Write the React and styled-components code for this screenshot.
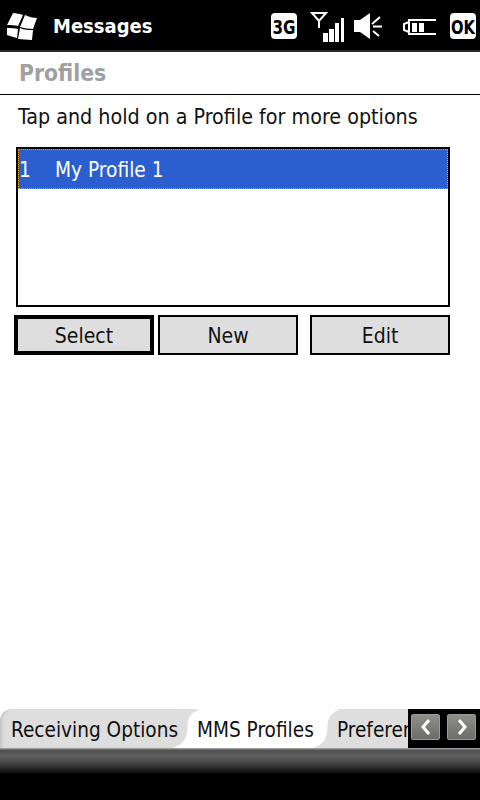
import React from "react";
import styled, { createGlobalStyle } from "styled-components";

const Global = createGlobalStyle`
  html, body { margin: 0; padding: 0; background: #fff; }
  * { box-sizing: border-box; }
  #root { width: 480px; height: 800px; overflow: hidden; }
`;

const FONT = `"DejaVu Sans", "Noto Sans", sans-serif`;

const Screen = styled.div`
  width: 480px;
  height: 800px;
  display: flex;
  flex-direction: column;
  background: #fff;
  font-family: ${FONT};
  font-stretch: condensed;
  color: #111;
`;

const TopBar = styled.header`
  height: 52px;
  flex: none;
  background: #000;
  border-bottom: 2px solid #2b2b2b;
  display: flex;
  align-items: center;
  padding: 1px 3px 0 7px;
  color: #fff;
`;

const Start = styled.svg`
  width: 32px;
  height: 32px;
  flex: none;
`;

const AppTitle = styled.span`
  margin-left: 14px;
  font-size: 20px;
  font-weight: 700;
  flex: 1;
`;

const Tray = styled.svg`
  width: 220px;
  height: 50px;
  flex: none;
  margin-right: -3px;
  margin-top: -1px;
`;

const Heading = styled.div`
  height: 43px;
  flex: none;
  border-bottom: 1px solid #000;
  display: flex;
  align-items: center;
  padding: 0 0 0 19px;
  font-size: 22.7px;
  font-weight: 700;
  color: #a0a0a0;
`;

const Hint = styled.p`
  margin: 0;
  height: 52px;
  flex: none;
  padding: 9px 0 0 18px;
  font-size: 21.3px;
  line-height: 26px;
  color: #111;
`;

const Body = styled.main`
  flex: 1;
  min-height: 0;
  display: flex;
  flex-direction: column;
  padding: 0 30px 0 14px;
`;

const List = styled.div`
  margin-left: 2px;
  height: 160px;
  flex: none;
  border: 2px solid #000;
  background: #fff;
`;

const ListRow = styled.div`
  height: 40px;
  background: #2b5fcf;
  outline: 1px dotted #e5a11c;
  outline-offset: -1px;
  color: #fff;
  font-size: 20.7px;
  display: flex;
  align-items: center;
  padding: 1px 0 0 1px;
`;

const RowIndex = styled.span`
  width: 36px;
  flex: none;
`;

const Actions = styled.div`
  margin-top: 8px;
  display: flex;
`;

const Action = styled.button`
  height: 40px;
  width: ${(p) => p.$w}px;
  margin-left: ${(p) => p.$gap}px;
  padding: 2px 0 0;
  background: #dedede;
  border: ${(p) => (p.$focus ? 4 : 2)}px solid #000;
  border-radius: 0;
  font-family: inherit;
  font-stretch: condensed;
  font-size: 21px;
  color: #111;
`;

const Spacer = styled.div`
  flex: 1;
`;

const TabBar = styled.nav`
  height: 39px;
  flex: none;
  display: flex;
  background: #fff;
`;

const Tab = styled.div`
  position: relative;
  width: ${(p) => p.$w}px;
  flex: none;
  background: ${(p) => (p.$active ? "#fff" : "#dedede")};
  border-top-left-radius: ${(p) => (p.$first ? 12 : 0)}px;
  ${(p) => p.$first && "box-shadow: inset 3px 0 3px -1px #c4c4c4;"}
  font-size: 20.6px;
  line-height: 42px;
  color: #111;
  white-space: nowrap;
  padding-left: ${(p) => p.$pad}px;
  ${(p) => p.$clip && "overflow: hidden;"}
`;

const TabLabel = styled.span`
  position: relative;
  z-index: 2;
`;

const TabEdge = styled.svg`
  position: absolute;
  top: 0;
  left: ${(p) => p.$x}px;
  width: 28px;
  height: 39px;
  z-index: 1;
`;

const Pager = styled.div`
  position: relative;
  z-index: 3;
  width: 72px;
  flex: none;
  background: #000;
  display: flex;
  gap: 7px;
  padding: 5px 0 0 3px;
`;

const PageButton = styled.div`
  width: 29px;
  height: 26px;
  border-radius: 2px;
  border: 1px solid #9a9a96;
  background: linear-gradient(#8e8e8a, #6c6c68);
  display: flex;
  align-items: center;
  justify-content: center;
`;

const Chevron = styled.svg`
  width: 14px;
  height: 20px;
`;

const BottomBar = styled.footer`
  height: 52px;
  flex: none;
  background: linear-gradient(#9a9a9a 0, #9a9a9a 1px, #4e4e4e 2px, #626262 8px, #3a3a3a 17px, #0c0c0c 25px, #000 26px);
`;

const Edge = ({ x, left, right }) => (
  <TabEdge $x={x} viewBox="0 0 28 39" aria-hidden="true">
    <rect width="28" height="39" fill={right} />
    <path
      d="M0 0H22C25 0 27 1 27 1C21 3 17 7 16 12C15 18 16 25 13 30C11 34 6 38 0 39Z"
      fill={left}
    />
  </TabEdge>
);

export default function App() {
  return (
    <Screen>
      <Global />
      <TopBar>
        <Start viewBox="0 0 32 32" aria-hidden="true">
          <g fill="#fff">
            <path d="M6 3C9 3 13 4 16 5L11 16C8 15 3 15 0 15Z" />
            <path d="M18 5C22 7 26 8 30 8L26 19C22 19 17 18 13 17Z" />
            <path d="M0 18C4 18 8 18 11 19L10 28C6 27 3 26 0 25Z" />
            <path d="M13 18C17 20 22 20 26 20L25 30C20 30 15 29 11 29Z" />
          </g>
        </Start>
        <AppTitle>Messages</AppTitle>
        <Tray viewBox="0 0 220 50" aria-hidden="true">
          <rect x="11" y="13" width="26" height="26" rx="4" fill="#fff" />
          <text x="24" y="34" textAnchor="middle" fontSize="20" fontWeight="700" fill="#000" fontFamily="DejaVu Sans" textLength="23" lengthAdjust="spacingAndGlyphs">3G</text>
          <path d="M52 13H66L59 21ZM59 21V28" fill="none" stroke="#fff" strokeWidth="2" />
          <path d="M63 33h5v9h-5zM69 29h5v13h-5zM75 23h4v19h-4zM81 18h3v24h-3z" fill="#fff" />
          <path d="M94 20h6l10-7v26l-10-7h-6z" fill="#fff" />
          <path d="M112 24l8-7M113 26.5h9M113 31l6 5" stroke="#fff" strokeWidth="2" fill="none" />
          <path d="M176 20h-27v14h27M149 22l-5 2v6l5 2" fill="none" stroke="#fff" strokeWidth="2" />
          <rect x="152" y="23" width="5" height="9" fill="#fff" />
          <rect x="159" y="23" width="5" height="9" fill="#fff" />
          <rect x="190" y="13" width="26" height="26" rx="4" fill="#fff" />
          <text x="203" y="34" textAnchor="middle" fontSize="20" fontWeight="700" fill="#000" fontFamily="DejaVu Sans" textLength="24" lengthAdjust="spacingAndGlyphs">OK</text>
        </Tray>
      </TopBar>
      <Heading>Profiles</Heading>
      <Hint>Tap and hold on a Profile for more options</Hint>
      <Body>
        <List>
          <ListRow>
            <RowIndex>1</RowIndex>
            My Profile 1
          </ListRow>
        </List>
        <Actions>
          <Action $w={140} $gap={0} $focus>Select</Action>
          <Action $w={140} $gap={4}>New</Action>
          <Action $w={140} $gap={12}>Edit</Action>
        </Actions>
        <Spacer />
      </Body>
      <TabBar>
        <Tab $w={187} $pad={11} $first>
          <TabLabel>Receiving Options</TabLabel>
          <Edge x={172} left="#dedede" right="#fff" />
        </Tab>
        <Tab $w={140} $pad={10} $active>
          <TabLabel>MMS Profiles</TabLabel>
          <Edge x={125} left="#fff" right="#dedede" />
        </Tab>
        <Tab $w={81} $pad={10} $clip>
          <TabLabel>Preferences</TabLabel>
        </Tab>
        <Pager>
          <PageButton>
            <Chevron viewBox="0 0 14 20" aria-hidden="true">
              <path d="M10 3L4 10L10 17" fill="none" stroke="#fff" strokeWidth="3" />
            </Chevron>
          </PageButton>
          <PageButton>
            <Chevron viewBox="0 0 14 20" aria-hidden="true">
              <path d="M4 3L10 10L4 17" fill="none" stroke="#fff" strokeWidth="3" />
            </Chevron>
          </PageButton>
        </Pager>
      </TabBar>
      <BottomBar />
    </Screen>
  );
}
